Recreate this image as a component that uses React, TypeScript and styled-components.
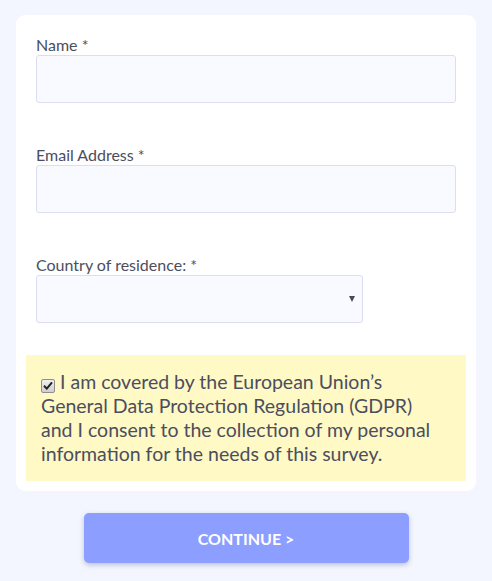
import React from "react";
import styled, { createGlobalStyle } from "styled-components";

const Global = createGlobalStyle`
  html, body { margin: 0; padding: 0; background: #f3f6fe; }
  body { font-family: Lato, "Open Sans", sans-serif; color: #4b4e5e; }
  * { box-sizing: border-box; }
`;

const Page = styled.div`
  width: 492px;
  min-height: 581px;
  padding: 15px 16px 0;
  display: flex;
  flex-direction: column;
  align-items: center;
`;

const Card = styled.div`
  width: 460px;
  background: #ffffff;
  border-radius: 9px;
  padding: 20px 10px 10px;
  display: flex;
  flex-direction: column;
`;

const Field = styled.div`
  padding: 0 10px;
  display: flex;
  flex-direction: column;
  margin-bottom: 42px;
`;

const Label = styled.label`
  font-size: 16px;
  line-height: 20px;
  color: #4b4e5e;
`;

const Input = styled.input`
  width: 100%;
  height: 48px;
  background: #f9faff;
  border: 1px solid #dcdef0;
  border-radius: 3px;
  outline: none;
  font-family: inherit;
  font-size: 15px;
  padding: 0 10px;
`;

const SelectWrap = styled.div`
  position: relative;
  width: 327px;
  height: 48px;
`;

const Select = styled.select`
  appearance: none;
  width: 100%;
  height: 100%;
  background: #f9faff;
  border: 1px solid #dcdef0;
  border-radius: 3px;
  outline: none;
  font-family: inherit;
  font-size: 15px;
  padding: 0 10px;
`;

const Arrow = styled.span`
  position: absolute;
  right: 8px;
  top: 21px;
  width: 0;
  height: 0;
  border-left: 3px solid transparent;
  border-right: 3px solid transparent;
  border-top: 6px solid #4a4a52;
  pointer-events: none;
`;

const Consent = styled.div`
  background: #fff9c5;
  padding: 15px 24px 15px 15px;
  font-size: 19.5px;
  line-height: 24px;
  color: #4b4e5e;
  margin-top: -10px;
`;

const Check = styled.span`
  display: inline-flex;
  align-items: center;
  justify-content: center;
  width: 14px;
  height: 14px;
  margin: 0 5px 0 0;
  border: 1px solid #8f8f8f;
  border-radius: 2px;
  background: linear-gradient(#f0f0f0, #cfcfcf);
  vertical-align: -1px;
  svg { display: block; }
`;

const Button = styled.button`
  margin-top: 22px;
  width: 325px;
  height: 50px;
  border: none;
  border-radius: 5px;
  background: #8c9eff;
  color: #ffffff;
  font-family: Lato, sans-serif;
  font-weight: 700;
  font-size: 16px;
  box-shadow: 0 2px 5px rgba(60, 70, 120, 0.3);
  cursor: pointer;
`;

export default function App() {
  return (
    <>
      <Global />
      <Page>
        <Card>
          <Field>
            <Label>Name *</Label>
            <Input type="text" />
          </Field>
          <Field>
            <Label>Email Address *</Label>
            <Input type="email" />
          </Field>
          <Field>
            <Label>Country of residence: *</Label>
            <SelectWrap>
              <Select defaultValue="">
                <option value=""></option>
              </Select>
              <Arrow />
            </SelectWrap>
          </Field>
          <Consent>
            <Check>
              <svg width="10" height="9" viewBox="0 0 10 9">
                <path d="M1 4.8 L3.8 7.6 L9 1.3" fill="none" stroke="#222" strokeWidth="2" />
              </svg>
            </Check>
            I am covered by the European Union’s General Data Protection Regulation (GDPR) and I consent to the collection of my personal information for the needs of this survey.
          </Consent>
        </Card>
        <Button>CONTINUE &gt;</Button>
      </Page>
    </>
  );
}
